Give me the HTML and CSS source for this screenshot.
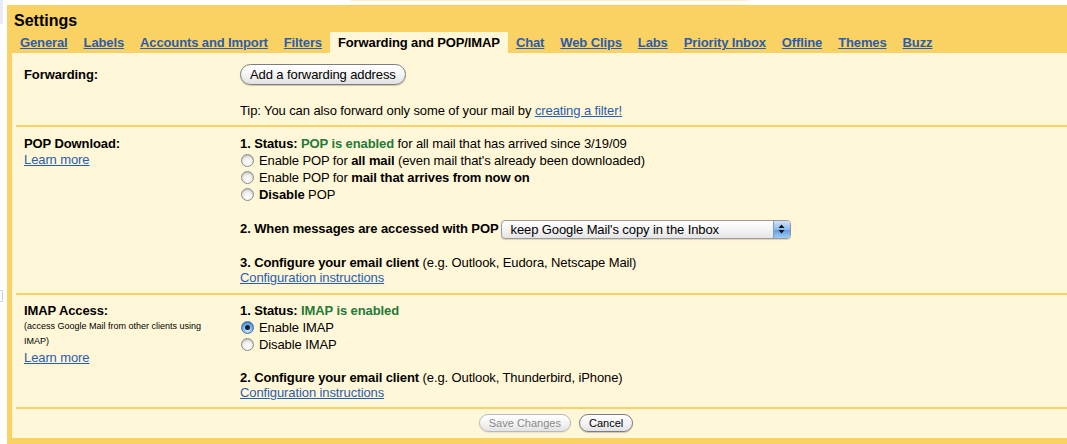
FILE: index.html
```html
<!DOCTYPE html>
<html>
<head>
<meta charset="utf-8">
<title>Settings</title>
<link rel="stylesheet" href="styles.css">
</head>
<body>
<div class="page">
  <div class="gutter">
    <div class="sliver"></div>
    <div class="sliver-box"></div>
  </div>
  <div class="main">
    <div class="topedge"></div>
    <div class="settings">
      <div class="title">Settings</div>
      <div class="tabs">
        <a class="tab" href="#">General</a>
        <a class="tab" href="#">Labels</a>
        <a class="tab" href="#">Accounts and Import</a>
        <a class="tab" href="#">Filters</a>
        <span class="tab active">Forwarding and POP/IMAP</span>
        <a class="tab" href="#">Chat</a>
        <a class="tab" href="#">Web Clips</a>
        <a class="tab" href="#">Labs</a>
        <a class="tab" href="#">Priority Inbox</a>
        <a class="tab" href="#">Offline</a>
        <a class="tab" href="#">Themes</a>
        <a class="tab" href="#">Buzz</a>
      </div>
      <div class="panel">
        <div class="section sec-fwd">
          <div class="label"><b class="fwd-label">Forwarding:</b></div>
          <div class="content">
            <div><span class="btn btn-big">Add a forwarding address</span></div>
            <div class="line tip">Tip: You can also forward only some of your mail by <a href="#">creating a filter!</a></div>
          </div>
        </div>

        <div class="section sec-pop">
          <div class="label">
            <div class="line"><b>POP Download:</b></div>
            <div class="line learn"><a href="#">Learn more</a></div>
          </div>
          <div class="content">
            <div class="line"><b>1. Status: <span class="ok">POP is enabled</span></b> for all mail that has arrived since 3/19/09</div>
            <label class="line opt"><span class="radio"></span><span>Enable POP for <b>all mail</b> (even mail that's already been downloaded)</span></label>
            <label class="line opt"><span class="radio"></span><span>Enable POP for <b>mail that arrives from now on</b></span></label>
            <label class="line opt"><span class="radio"></span><span><b>Disable</b> POP</span></label>
            <div class="line when gap"><b>2. When messages are accessed with POP</b>
              <span class="select"><span class="select-text">keep Google Mail's copy in the Inbox</span><span class="select-arrow"><svg width="7" height="10" viewBox="0 0 7 10"><path d="M3.5 0.5 L6.5 4 L0.5 4 Z M3.5 9.5 L6.5 6 L0.5 6 Z" fill="#111"/></svg></span></span>
            </div>
            <div class="line gap"><b>3. Configure your email client</b> (e.g. Outlook, Eudora, Netscape Mail)</div>
            <div class="line link-line"><a href="#">Configuration instructions</a></div>
          </div>
        </div>

        <div class="section sec-imap">
          <div class="label">
            <div class="line"><b>IMAP Access:</b></div>
            <div class="small">(access Google Mail from other clients using<br>IMAP)</div>
            <div class="line"><a href="#">Learn more</a></div>
          </div>
          <div class="content">
            <div class="line"><b>1. Status: <span class="ok">IMAP is enabled</span></b></div>
            <label class="line opt"><span class="radio checked"></span><span>Enable IMAP</span></label>
            <label class="line opt"><span class="radio"></span><span>Disable IMAP</span></label>
            <div class="line gap-s"><b>2. Configure your email client</b> (e.g. Outlook, Thunderbird, iPhone)</div>
            <div class="line link-line"><a href="#">Configuration instructions</a></div>
          </div>
        </div>

        <div class="actions">
          <span class="btn btn-small disabled">Save Changes</span>
          <span class="btn btn-small">Cancel</span>
        </div>
      </div>
    </div>
  </div>
</div>
</body>
</html>
```
FILE: styles.css
```css
html, body {
  margin: 0;
  padding: 0;
  background: #fff;
  overflow: hidden;
}
body {
  font-family: "Liberation Sans", Arial, sans-serif;
  font-size: 13px;
  letter-spacing: -0.1px;
  color: #000;
}
a {
  color: #2a5db0;
}
.page {
  display: flex;
  width: 1110px;
}
.gutter {
  width: 7px;
  flex: none;
  display: flex;
  flex-direction: column;
}
.sliver {
  width: 3px;
  height: 24px;
  background: #e8ecf9;
}
.sliver-box {
  width: 2px;
  height: 10px;
  margin-top: 266px;
  border: 1px solid #c9d3ee;
  border-left: none;
}
.main {
  flex: none;
}
.topedge {
  height: 1px;
  width: 397px;
  margin-left: 343px;
  margin-bottom: 4px;
  background: #fff1bd;
}
.settings {
  width: 1088px;
  background: #fad163;
  padding: 0 5px 6px;
}
.title {
  font-size: 16px;
  font-weight: bold;
  line-height: 19px;
  padding: 6px 0 0 2px;
  margin-bottom: 2px;
  letter-spacing: 0;
}
.tabs {
  display: flex;
  font-weight: bold;
  line-height: 21px;
  letter-spacing: -0.12px;
}
.tab {
  padding: 0 8px;
  white-space: nowrap;
}
.tab.active {
  background: #fff7d7;
  color: #000;
}
.panel {
  background: #fff7d7;
}
.section {
  display: grid;
  grid-template-columns: 216px 1fr;
  margin-left: 4px;
  padding-left: 8px;
  border-bottom: 2px solid #fad163;
}
.line {
  display: block;
  line-height: 17px;
  white-space: nowrap;
}
.learn {
  margin-top: -1px;
}
.sec-fwd {
  padding: 11px 0 6px 8px;
}
.fwd-label {
  display: block;
  line-height: 17px;
  padding-top: 2px;
}
.tip {
  margin-top: 17px;
}
.sec-pop {
  padding: 8px 0 8px 8px;
}
.sec-imap {
  padding: 7px 0 7px 8px;
}
.gap {
  margin-top: 17px;
}
.gap-s {
  margin-top: 16px;
}
.link-line {
  line-height: 15px;
  margin-top: -1px;
}
.ok {
  color: #237a38;
}
.small {
  font-size: 9px;
  line-height: 15px;
  letter-spacing: 0;
}
.opt {
  display: flex;
  align-items: center;
}
.radio {
  box-sizing: border-box;
  width: 13px;
  height: 13px;
  border-radius: 50%;
  margin: 0 5px 0 1px;
  border: 1px solid #8c8c8c;
  background: radial-gradient(circle at 50% 70%, #ffffff 0%, #f2f2f2 40%, #cfcfcf 100%);
  box-shadow: inset 0 1px 1px rgba(0,0,0,0.15);
  display: flex;
  align-items: center;
  justify-content: center;
  flex: none;
}
.radio.checked {
  border-color: #3f6fa8;
  background: radial-gradient(circle at 50% 75%, #d6ecff 0%, #7fb8ee 45%, #2f7fd3 100%);
}
.radio.checked::after {
  content: "";
  width: 5px;
  height: 5px;
  border-radius: 50%;
  background: #12203a;
}
.when {
  display: flex;
  align-items: center;
  gap: 2px;
  height: 17px;
}
.select {
  box-sizing: border-box;
  display: inline-flex;
  width: 290px;
  height: 19px;
  margin-top: 1px;
  border: 1px solid #9a9a9a;
  border-radius: 4px;
  background: linear-gradient(#ffffff, #f1f1f1 60%, #e4e4e4);
  box-shadow: 0 1px 1px rgba(0,0,0,0.15);
  overflow: hidden;
  font-weight: normal;
}
.select-text {
  flex: 1;
  padding-left: 9px;
  line-height: 17px;
}
.select-arrow {
  width: 16px;
  flex: none;
  display: flex;
  align-items: center;
  justify-content: center;
  border-left: 1px solid #7b9cc7;
  background: linear-gradient(#cfe4fb, #8bbcef 50%, #5d9de3 51%, #9fcaf5);
}
.btn {
  display: inline-block;
  box-sizing: border-box;
  white-space: nowrap;
  border: 1px solid #7d7d7d;
  border-radius: 11px;
  background: linear-gradient(#ffffff, #f4f4f4 50%, #e2e2e2);
  box-shadow: 0 1px 1px rgba(0,0,0,0.2);
  color: #000;
}
.btn-big {
  height: 21px;
  line-height: 19px;
  padding: 0 9px;
  font-size: 13px;
}
.actions {
  text-align: center;
  padding: 5px 0 6px;
  font-size: 0;
}
.btn-small {
  height: 18px;
  line-height: 16px;
  padding: 0 9px;
  font-size: 11px;
  margin: 0 4px;
  letter-spacing: 0;
}
.btn-small.disabled {
  color: #8a8a8a;
  border-color: #b9b9b9;
  box-shadow: 0 1px 1px rgba(0,0,0,0.08);
}
```
